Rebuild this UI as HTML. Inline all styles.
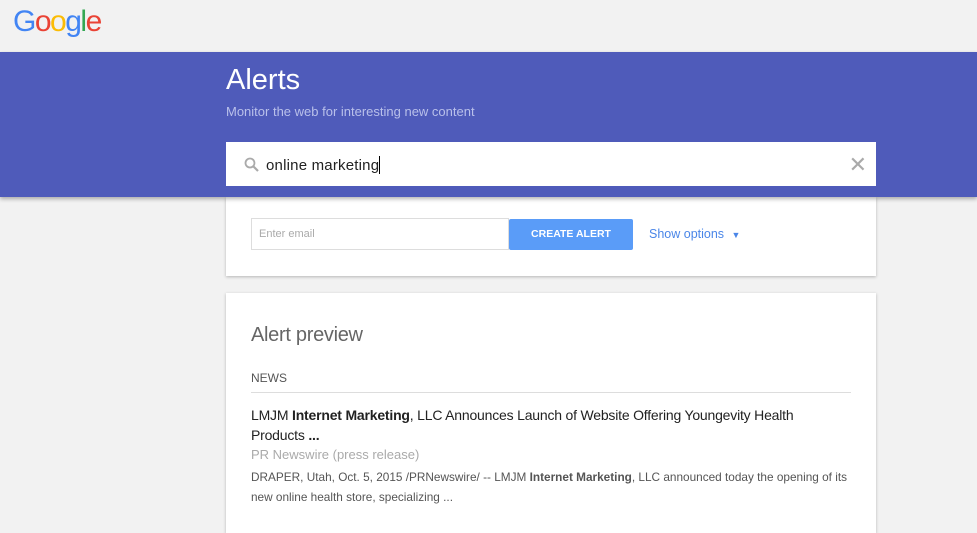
<!DOCTYPE html>
<html><head><meta charset="utf-8"><style>
*{margin:0;padding:0;box-sizing:border-box}
body{width:977px;height:518px;overflow:hidden;background:#f2f2f2;font-family:"Liberation Sans",sans-serif;position:relative}
.logo{position:absolute;left:13px;top:5px;font-size:30px;letter-spacing:-1.5px;font-family:"Liberation Sans",sans-serif}
.band{position:absolute;left:0;top:52px;width:977px;height:145px;background:#4f5bba;box-shadow:0 2px 4px rgba(0,0,0,.3);z-index:2}
.h1{position:absolute;left:226px;top:64px;color:#fff;font-size:29px;z-index:3}
.sub{position:absolute;left:226px;top:104px;color:#b9c0ea;font-size:13px;z-index:3}
.search{position:absolute;left:226px;top:142px;width:650px;height:44px;background:#fff;z-index:3}
.search .q{position:absolute;left:40px;top:14px;font-size:15px;color:#222;letter-spacing:.2px}
.cur{display:inline-block;width:1px;height:18px;background:#000;vertical-align:-4px}
.x{position:absolute;right:9px;top:10px;font-size:22px;color:#aaa}
.card{position:absolute;left:226px;width:650px;background:#fff;box-shadow:0 1px 3px rgba(0,0,0,.25)}
.email{position:absolute;left:25px;top:21px;width:258px;height:32px;border:1px solid #ddd;font-size:11px;color:#aaa;padding:9px 7px}
.btn{position:absolute;left:283px;top:22px;width:124px;height:31px;background:#5a9cf8;color:#fff;font-weight:bold;font-size:10.5px;text-align:center;line-height:31px;border-radius:2px}
.opt{position:absolute;left:423px;top:30px;font-size:12.5px;color:#4a86e8}
</style></head><body>
<div class="logo"><span style="color:#4285f4">G</span><span style="color:#ea4335">o</span><span style="color:#fbbc05">o</span><span style="color:#4285f4">g</span><span style="color:#34a853">l</span><span style="color:#ea4335">e</span></div>
<div class="band"></div>
<div class="h1">Alerts</div>
<div class="sub">Monitor the web for interesting new content</div>
<div class="search">
<svg style="position:absolute;left:18px;top:15px" width="15" height="15" viewBox="0 0 15 15"><circle cx="6" cy="6" r="4.5" fill="none" stroke="#aaa" stroke-width="1.8"/><path d="M9.5 9.5L14 14" stroke="#aaa" stroke-width="2.2"/></svg>
<div class="q">online marketing<span class="cur"></span></div>
<div class="x">✕</div>
</div>
<div class="card" style="top:197px;height:79px;z-index:1">
<div class="email">Enter email</div>
<div class="btn">CREATE ALERT</div>
<div class="opt">Show options <span style="font-size:9px;margin-left:4px">▼</span></div>
</div>
<div class="card" style="top:293px;height:240px">
<div style="position:absolute;left:25px;top:31px;font-size:20px;color:#666;letter-spacing:-.3px">Alert preview</div>
<div style="position:absolute;left:25px;top:78px;font-size:12px;color:#555">NEWS</div>
<div style="position:absolute;left:25px;top:99px;width:600px;height:1px;background:#ddd"></div>
<div style="position:absolute;left:25px;top:112px;width:580px;font-size:14px;letter-spacing:-.2px;line-height:20px;color:#222">LMJM <b>Internet Marketing</b>, LLC Announces Launch of Website Offering Youngevity Health Products <b>...</b></div>
<div style="position:absolute;left:25px;top:154px;font-size:13px;color:#aaa">PR Newswire (press release)</div>
<div style="position:absolute;left:25px;top:174px;width:600px;font-size:11.8px;line-height:20px;color:#555">DRAPER, Utah, Oct. 5, 2015 /PRNewswire/ -- LMJM <b>Internet Marketing</b>, LLC announced today the opening of its new online health store, specializing ...</div>
</div>
</body></html>
